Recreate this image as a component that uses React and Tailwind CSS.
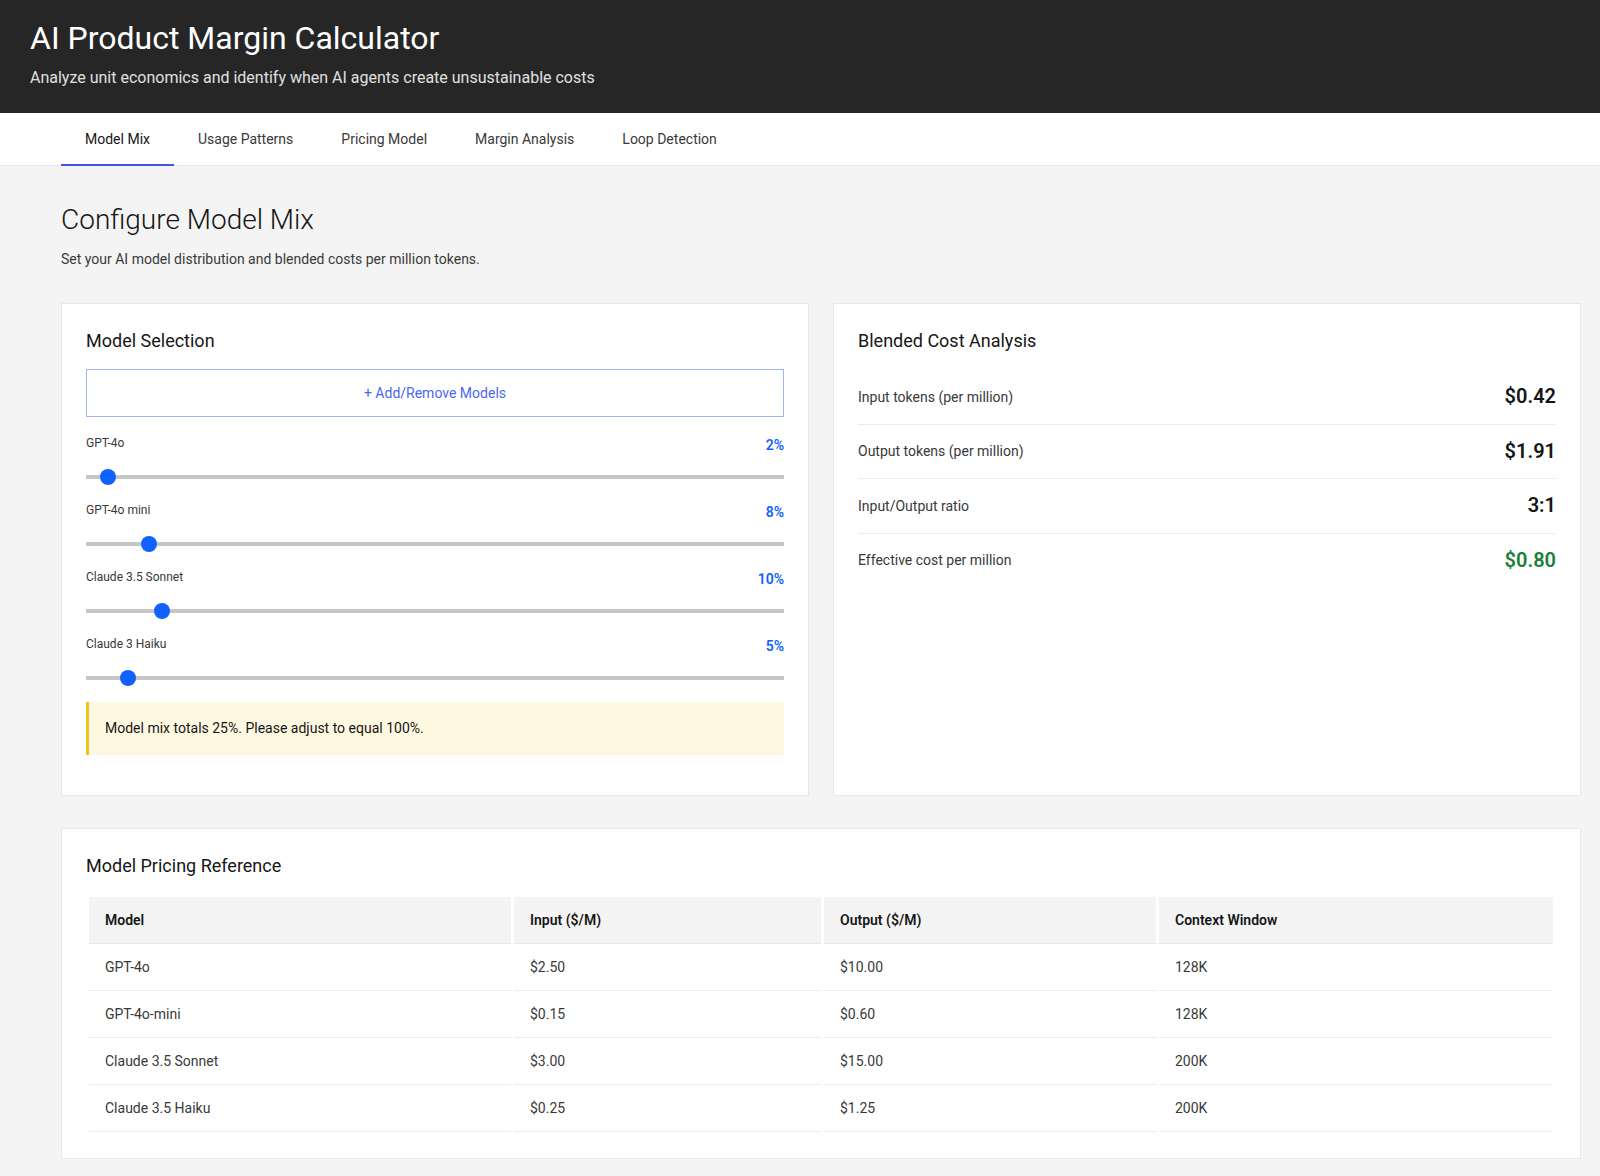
import React, {useState} from "react";

const tabs = ["Model Mix", "Usage Patterns", "Pricing Model", "Margin Analysis", "Loop Detection"];

const pricing = [
    {model: "GPT-4o", input: "$2.50", output: "$10.00", context: "128K"},
    {model: "GPT-4o-mini", input: "$0.15", output: "$0.60", context: "128K"},
    {model: "Claude 3.5 Sonnet", input: "$3.00", output: "$15.00", context: "200K"},
    {model: "Claude 3.5 Haiku", input: "$0.25", output: "$1.25", context: "200K"},
];

function Slider({label, value, onChange}) {
    return (
        <div>
            <div className="flex items-start justify-between">
                <span className="text-xs leading-4 text-[#393939]">{label}</span>
                <span className="text-sm leading-5 font-semibold text-[#0f62fe]">{value}%</span>
            </div>
            <input
                type="range"
                min="0"
                max="100"
                value={value}
                onChange={(e) => onChange(Number(e.target.value))}
                className="mt-5 block w-full h-1 appearance-none bg-[#c6c6c6] cursor-pointer outline-none [&::-webkit-slider-thumb]:appearance-none [&::-webkit-slider-thumb]:h-4 [&::-webkit-slider-thumb]:w-4 [&::-webkit-slider-thumb]:rounded-full [&::-webkit-slider-thumb]:bg-[#0f62fe] [&::-webkit-slider-thumb]:border-0"
            />
        </div>
    );
}

export default function App() {
    const [active, setActive] = useState(0);
    const [mix, setMix] = useState([
        {name: "GPT-4o", pct: 2},
        {name: "GPT-4o mini", pct: 8},
        {name: "Claude 3.5 Sonnet", pct: 10},
        {name: "Claude 3 Haiku", pct: 5},
    ]);
    const total = mix.reduce((s, m) => s + m.pct, 0);

    const update = (i, v) => setMix(mix.map((m, j) => (j === i ? {...m, pct: v} : m)));

    return (
        <div className="min-h-screen bg-[#f4f4f4] font-['Roboto','Liberation_Sans',sans-serif] text-[#161616]">
            {/* Header */}
            <header className="h-[113px] bg-[#262626] px-[30px] pt-[18px]">
                <h1 className="text-[32px] leading-10 text-white">AI Product Margin Calculator</h1>
                <p className="mt-2 text-base leading-6 text-[#e0e0e0]">
                    Analyze unit economics and identify when AI agents create unsustainable costs
                </p>
            </header>

            {/* Tabs */}
            <nav className="flex h-[53px] bg-white border-b border-[#e8e8e8] pl-[61px]">
                {tabs.map((t, i) => (
                    <button
                        key={t}
                        onClick={() => setActive(i)}
                        className={
                            i === active
                                ? "h-[53px] px-6 pt-px text-sm text-[#161616] border-b-2 border-[#4353e8]"
                                : "h-[53px] px-6 pt-px text-sm text-[#393939] border-b-2 border-transparent"
                        }
                    >
                        {t}
                    </button>
                ))}
            </nav>

            <main className="pl-[61px] pr-[19px] pt-9 pb-4">
                <h2 className="text-[28px] leading-9 font-light">Configure Model Mix</h2>
                <p className="mt-[11px] text-sm leading-5 text-[#393939]">
                    Set your AI model distribution and blended costs per million tokens.
                </p>

                <div className="mt-[34px] grid grid-cols-2 gap-6">
                    {/* Model Selection */}
                    <div className="bg-white border border-[#e8e8e8] p-6">
                        <h3 className="text-lg leading-[26px] mb-[15px]">Model Selection</h3>
                        <button className="w-full h-12 border border-[#a3b3f7] text-sm text-[#4a68f0]">
                            + Add/Remove Models
                        </button>
                        <div className="mt-[18px] flex flex-col gap-[23px]">
                            {mix.map((m, i) => (
                                <Slider key={m.name} label={m.name} value={m.pct} onChange={(v) => update(i, v)}/>
                            ))}
                        </div>
                        {total !== 100 && (
                            <div className="mt-[22px] mb-4 bg-[#fff8e1] border-l-[3px] border-[#f1c21b] pl-4 py-4 text-sm leading-[21px]">
                                Model mix totals {total}%. Please adjust to equal 100%.
                            </div>
                        )}
                    </div>

                    {/* Blended Cost Analysis */}
                    <div className="bg-white border border-[#e8e8e8] p-6">
                        <h3 className="text-lg leading-[26px] mb-4">Blended Cost Analysis</h3>
                        <div className="divide-y divide-[#ececec]">
                            <div className="flex items-center justify-between py-[13px]">
                                <span className="text-sm text-[#393939]">Input tokens (per million)</span>
                                <span className="text-xl leading-[27.5px] font-semibold">$0.42</span>
                            </div>
                            <div className="flex items-center justify-between py-[13px]">
                                <span className="text-sm text-[#393939]">Output tokens (per million)</span>
                                <span className="text-xl leading-[27.5px] font-semibold">$1.91</span>
                            </div>
                            <div className="flex items-center justify-between py-[13px]">
                                <span className="text-sm text-[#393939]">Input/Output ratio</span>
                                <span className="text-xl leading-[27.5px] font-semibold">3:1</span>
                            </div>
                            <div className="flex items-center justify-between py-[13px]">
                                <span className="text-sm text-[#393939]">Effective cost per million</span>
                                <span className="text-xl leading-[27.5px] font-semibold text-[#198038]">$0.80</span>
                            </div>
                        </div>
                    </div>
                </div>

                {/* Pricing table */}
                <div className="mt-8 bg-white border border-[#e8e8e8] px-6 pt-6 pb-[26px]">
                    <h3 className="text-lg leading-[26px] mb-[18px]">Model Pricing Reference</h3>
                    <table className="w-full table-fixed border-separate border-spacing-x-[3px] border-spacing-y-0 text-sm">
                        <thead>
                            <tr>
                                <th className="w-[422px] bg-[#f4f4f4] border-b border-[#e8e8e8] px-4 py-[13px] leading-5 text-left font-semibold">Model</th>
                                <th className="w-[307px] bg-[#f4f4f4] border-b border-[#e8e8e8] px-4 py-[13px] leading-5 text-left font-semibold">Input ($/M)</th>
                                <th className="w-[332px] bg-[#f4f4f4] border-b border-[#e8e8e8] px-4 py-[13px] leading-5 text-left font-semibold">Output ($/M)</th>
                                <th className="bg-[#f4f4f4] border-b border-[#e8e8e8] px-4 py-[13px] leading-5 text-left font-semibold">Context Window</th>
                            </tr>
                        </thead>
                        <tbody>
                            {pricing.map((r) => (
                                <tr key={r.model}>
                                    <td className="border-b border-[#ececec] px-4 py-[13px] leading-5 text-[#393939]">{r.model}</td>
                                    <td className="border-b border-[#ececec] px-4 py-[13px] leading-5 text-[#393939]">{r.input}</td>
                                    <td className="border-b border-[#ececec] px-4 py-[13px] leading-5 text-[#393939]">{r.output}</td>
                                    <td className="border-b border-[#ececec] px-4 py-[13px] leading-5 text-[#393939]">{r.context}</td>
                                </tr>
                            ))}
                        </tbody>
                    </table>
                </div>
            </main>
        </div>
    );
}
